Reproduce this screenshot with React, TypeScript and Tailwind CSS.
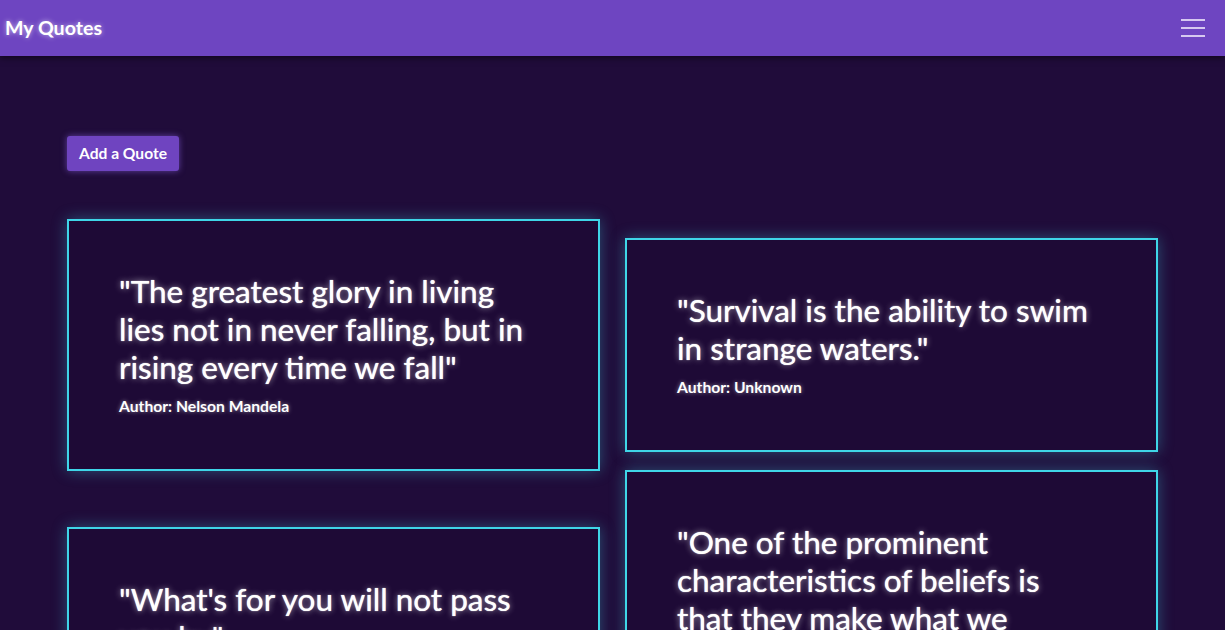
const quotesLeft = [
  {
    text: '"The greatest glory in living lies not in never falling, but in rising every time we fall"',
    author: "Nelson Mandela",
  },
  {
    text: '"What\'s for you will not pass you by"',
    author: "Unknown",
  },
];

const quotesRight = [
  {
    text: '"Survival is the ability to swim in strange waters."',
    author: "Unknown",
  },
  {
    text: '"One of the prominent characteristics of beliefs is that they make what we believe true"',
    author: "Unknown",
  },
];

const QuoteCard = ({ text, author }: { text: string; author: string }) => {
  return (
    <div className="border-2 border-[#3fd6e8] bg-[#1e0a36] pl-[50px] pr-[62px] pt-[51px] pb-[52px] shadow-[0_0_14px_rgba(63,214,232,0.35)]">
      <p className="text-[31.5px] leading-[38px] font-normal text-white [text-shadow:0_0_1px_#fff,0_0_6px_rgba(255,255,255,0.6)]">
        {text}
      </p>
      <p className="mt-[9px] text-[15.7px] leading-[22px] font-bold text-white [text-shadow:0_0_4px_rgba(255,255,255,0.5)]">
        Author: {author}
      </p>
    </div>
  );
};

const App = () => {
  return (
    <div className="min-h-[630px] bg-[#200c3a] font-['Lato',sans-serif]">
      <nav className="flex h-14 items-center justify-between bg-[#6e45c1] pl-[5px] pr-5 shadow-[0_2px_6px_rgba(0,0,0,0.5)]">
        <span className="text-[19.6px] font-bold text-white [text-shadow:0_0_5px_rgba(255,255,255,0.6)]">
          My Quotes
        </span>
        <button className="flex flex-col gap-[6px]">
          <span className="block h-[2px] w-6 bg-[#d6c8f0]" />
          <span className="block h-[2px] w-6 bg-[#d6c8f0]" />
          <span className="block h-[2px] w-6 bg-[#d6c8f0]" />
        </button>
      </nav>

      <main className="px-[67px] pt-20">
        <button className="h-[35px] rounded-[3px] bg-[#6f44c0] px-3 text-[15.6px] font-bold text-white shadow-[0_0_6px_rgba(140,100,230,0.6)]">
          Add a Quote
        </button>

        <div className="mt-12 grid grid-cols-2 gap-x-[25px]">
          <div className="flex flex-col gap-[56px]">
            {quotesLeft.map((q) => (
              <QuoteCard key={q.text} {...q} />
            ))}
          </div>
          <div className="flex flex-col gap-[18px] pt-[19px]">
            {quotesRight.map((q) => (
              <QuoteCard key={q.text} {...q} />
            ))}
          </div>
        </div>
      </main>
    </div>
  );
};

export default App;
